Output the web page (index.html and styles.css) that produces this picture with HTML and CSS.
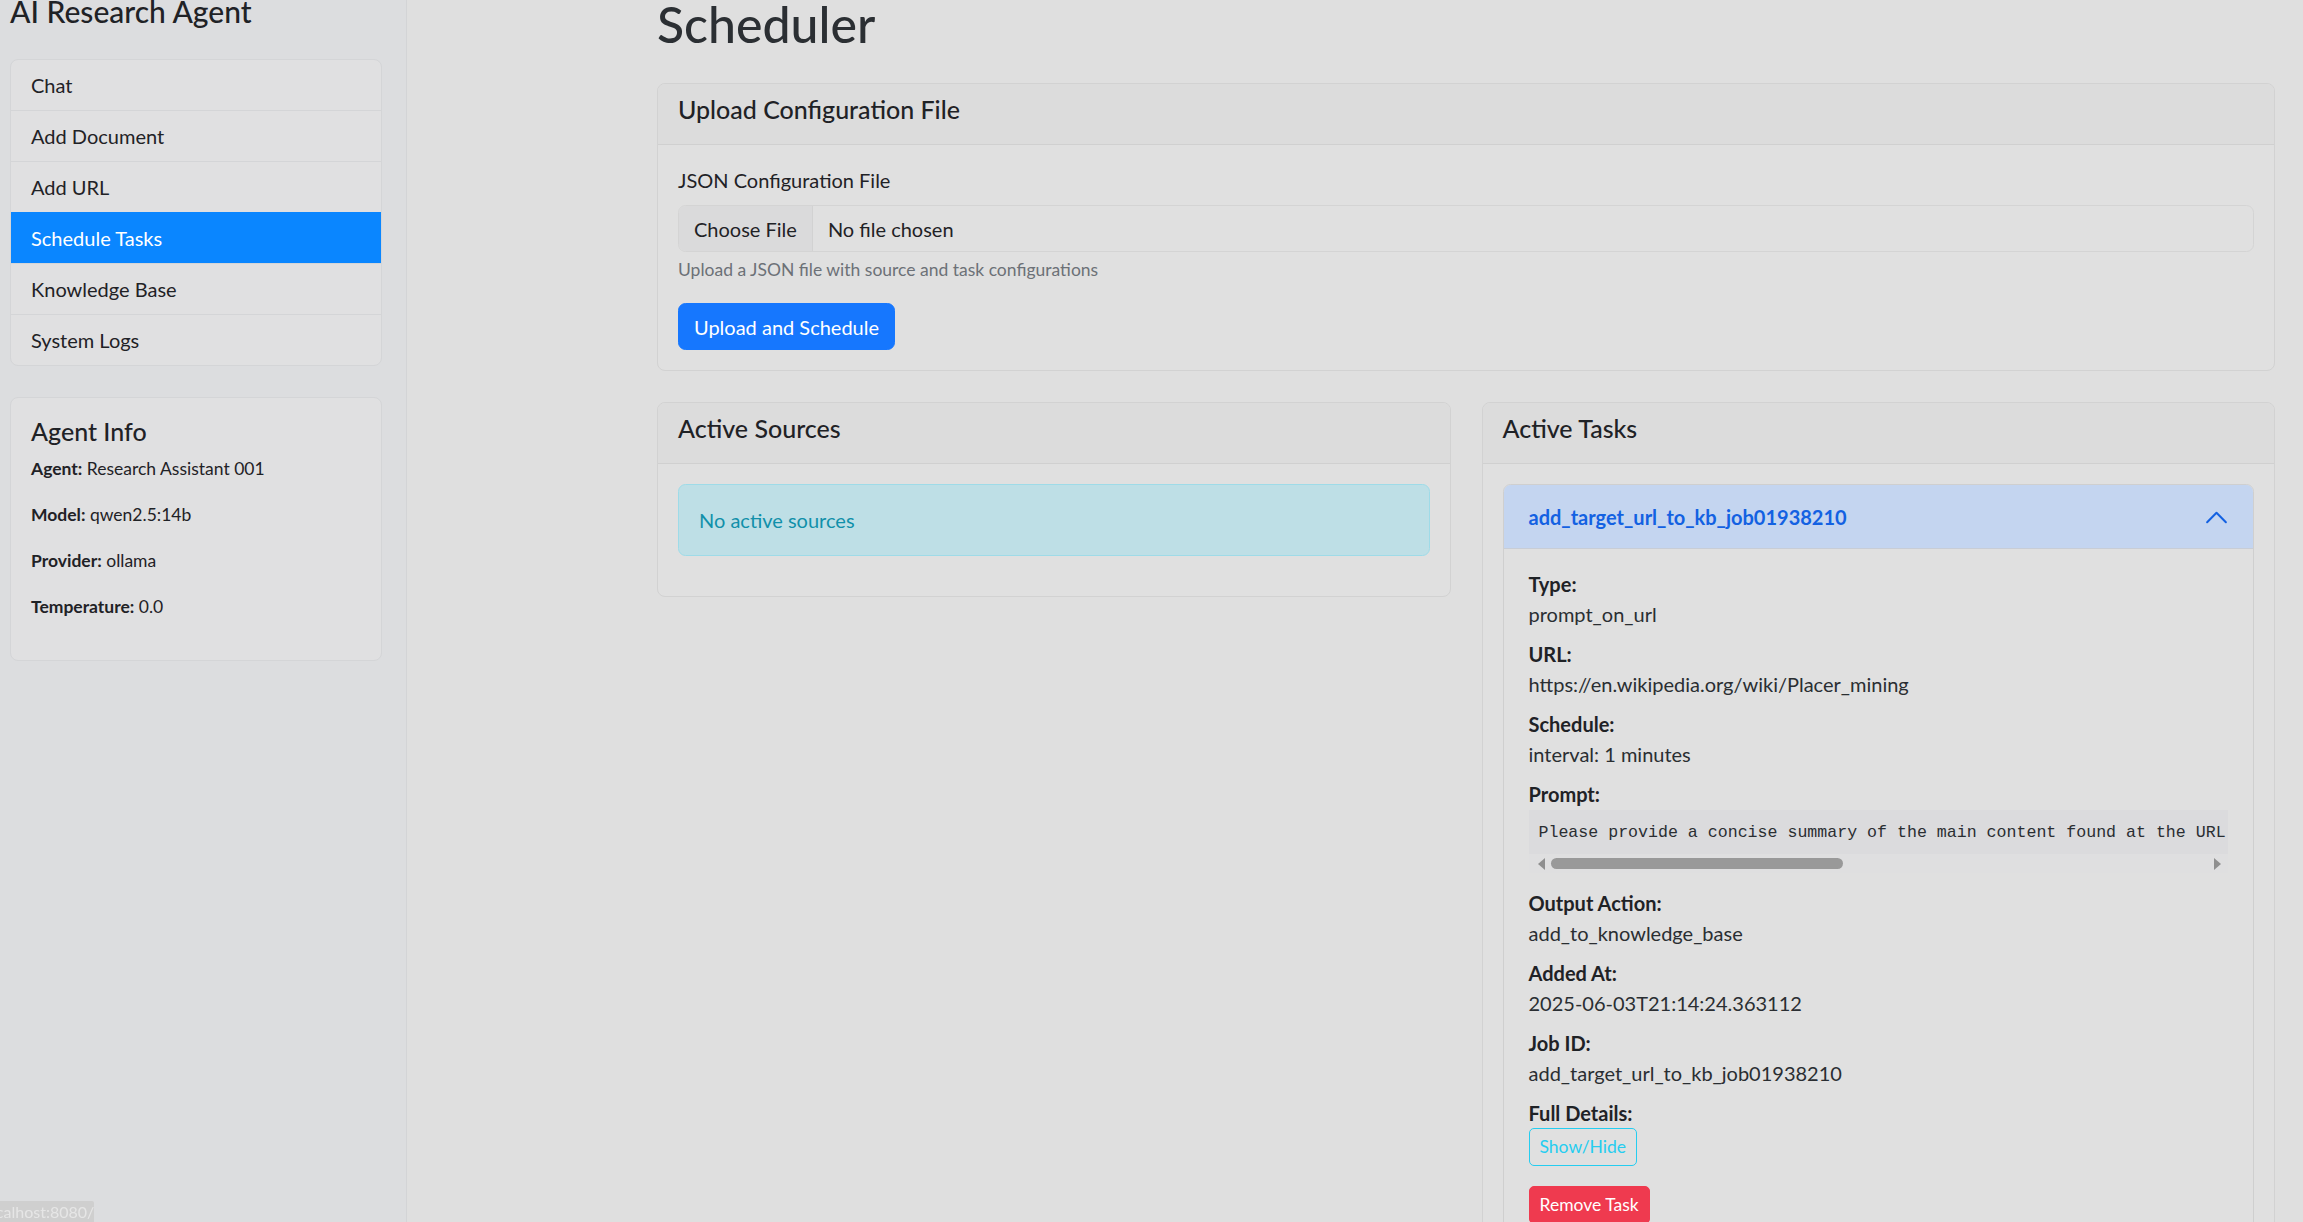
FILE: index.html
```html
<!DOCTYPE html>
<html lang="en">
<head>
<meta charset="utf-8">
<title>Scheduler - AI Research Agent</title>
<link rel="stylesheet" href="styles.css">
</head>
<body>
<div class="layout">
  <aside class="sidebar">
    <h4 class="brand">AI Research Agent</h4>
    <nav class="nav-list">
      <a class="nav-item" href="#">Chat</a>
      <a class="nav-item" href="#">Add Document</a>
      <a class="nav-item" href="#">Add URL</a>
      <a class="nav-item active" href="#">Schedule Tasks</a>
      <a class="nav-item" href="#">Knowledge Base</a>
      <a class="nav-item" href="#">System Logs</a>
    </nav>
    <div class="info-card">
      <h5 class="info-title">Agent Info</h5>
      <p class="info-line"><strong>Agent:</strong> Research Assistant 001</p>
      <p class="info-line"><strong>Model:</strong> qwen2.5:14b</p>
      <p class="info-line"><strong>Provider:</strong> ollama</p>
      <p class="info-line"><strong>Temperature:</strong> 0.0</p>
    </div>
  </aside>

  <main class="main">
    <h1 class="page-title">Scheduler</h1>

    <section class="card upload-card">
      <div class="card-header"><h5 class="card-title">Upload Configuration File</h5></div>
      <div class="card-body">
        <div class="form-group">
          <label class="form-label">JSON Configuration File</label>
          <div class="file-input">
            <span class="file-btn">Choose File</span>
            <span class="file-name">No file chosen</span>
          </div>
          <div class="form-text">Upload a JSON file with source and task configurations</div>
        </div>
        <button class="btn btn-primary">Upload and Schedule</button>
      </div>
    </section>

    <div class="columns">
      <section class="card">
        <div class="card-header"><h5 class="card-title">Active Sources</h5></div>
        <div class="card-body">
          <div class="alert-info">No active sources</div>
        </div>
      </section>

      <section class="card">
        <div class="card-header"><h5 class="card-title">Active Tasks</h5></div>
        <div class="card-body">
          <div class="accordion-item">
            <div class="accordion-button">
              <span>add_target_url_to_kb_job01938210</span>
              <svg class="chevron" viewBox="0 0 16 16" width="25" height="25"><path d="M2 11L8 5L14 11" fill="none" stroke="#1361e2" stroke-width="1.3" stroke-linecap="round" stroke-linejoin="round"/></svg>
            </div>
            <div class="accordion-body">
              <div class="field"><strong class="field-label">Type:</strong><div class="field-value">prompt_on_url</div></div>
              <div class="field"><strong class="field-label">URL:</strong><div class="field-value">https://en.wikipedia.org/wiki/Placer_mining</div></div>
              <div class="field"><strong class="field-label">Schedule:</strong><div class="field-value">interval: 1 minutes</div></div>
              <div class="field">
                <strong class="field-label">Prompt:</strong>
                <div class="prompt-box">
                  <pre class="prompt">Please provide a concise summary of the main content found at the URL. Highlight the key points, important facts and any notable details that should be added to the knowledge base.</pre>
                  <div class="hscroll">
                    <span class="arrow arrow-left"></span>
                    <span class="thumb"></span>
                    <span class="track-rest"></span>
                    <span class="arrow arrow-right"></span>
                  </div>
                </div>
              </div>
              <div class="field"><strong class="field-label">Output Action:</strong><div class="field-value">add_to_knowledge_base</div></div>
              <div class="field"><strong class="field-label">Added At:</strong><div class="field-value">2025-06-03T21:14:24.363112</div></div>
              <div class="field"><strong class="field-label">Job ID:</strong><div class="field-value">add_target_url_to_kb_job01938210</div></div>
              <div class="field field-last"><strong class="field-label">Full Details:</strong><button class="btn-sm btn-outline-info">Show/Hide</button></div>
              <button class="btn-sm btn-danger">Remove Task</button>
            </div>
          </div>
        </div>
      </section>
    </div>
  </main>
</div>
<div class="status-bubble"><span>localhost:8080/u</span></div>
</body>
</html>
```
FILE: styles.css
```css
* { box-sizing: border-box; }

html, body {
  margin: 0;
  padding: 0;
  height: 100%;
  overflow: hidden;
}

body {
  font-family: Lato, "Open Sans", "Liberation Sans", sans-serif;
  font-size: 20px;
  line-height: 30px;
  color: #1f2226;
  background: #dfdfdf;
}

.layout {
  display: flex;
  min-height: 100vh;
}

/* Sidebar */
.sidebar {
  width: 407px;
  flex: 0 0 407px;
  background: #dcdddf;
  border-right: 1px solid #d3d4d6;
  padding: 0 24px 0 10px;
}

.brand {
  margin: -7px 0 30px;
  font-size: 30px;
  line-height: 36px;
  font-weight: 500;
  color: #1f2226;
}

.nav-list {
  display: flex;
  flex-direction: column;
  border: 1px solid #d4d5d7;
  border-radius: 8px;
  background: #e0e0e1;
  overflow: hidden;
}

.nav-item {
  display: block;
  padding: 10px 20px;
  line-height: 30px;
  color: #1f2226;
  text-decoration: none;
  border-top: 1px solid #d4d5d7;
}

.nav-item:first-child { border-top: none; }

.nav-item.active {
  background: #0a86ff;
  color: #ffffff;
  border-top-color: #0a86ff;
  margin: 0 -1px;
  padding-left: 21px;
}

.info-card {
  margin-top: 31px;
  border: 1px solid #d4d5d7;
  border-radius: 8px;
  background: #e0e0e1;
  padding: 18px 20px 20px;
}

.info-title {
  margin: 0 0 10px;
  font-size: 25px;
  line-height: 30px;
  font-weight: 500;
}

.info-line {
  margin: 0 0 20px;
  font-size: 17.5px;
  line-height: 26px;
}

.info-line strong { font-weight: 700; }

/* Main */
.main {
  flex: 1;
  min-width: 0;
  padding: 0 28px 0 250px;
}

.page-title {
  margin: -6px 0 29px;
  font-size: 50px;
  line-height: 60px;
  font-weight: 500;
  color: #2b2f33;
}

.card {
  background: #e0e0e0;
  border: 1px solid #d2d2d2;
  border-radius: 8px;
  overflow: hidden;
  min-width: 0;
}

.upload-card { margin-bottom: 31px; }

.card-header {
  background: #dcdcdc;
  border-bottom: 1px solid #d0d0d0;
  padding: 10px 20px;
}

.card-title {
  margin: 0 0 10px;
  font-size: 25px;
  line-height: 30px;
  font-weight: 500;
  color: #1f2226;
}

.card-body { padding: 20px; }

.form-group { margin-bottom: 20px; }

.form-label {
  display: block;
  margin-bottom: 10px;
}

.file-input {
  display: flex;
  align-items: stretch;
  height: 47px;
  border: 1px solid #d4d4d4;
  border-radius: 7.5px;
  overflow: hidden;
  background: #e0e0e0;
}

.file-btn {
  display: flex;
  align-items: center;
  padding: 0 15px;
  background: #dadadb;
  border-right: 1px solid #d2d2d2;
}

.file-name {
  display: flex;
  align-items: center;
  padding: 0 15px;
}

.form-text {
  margin-top: 5px;
  font-size: 17.5px;
  line-height: 26px;
  color: #6c7177;
}

.btn {
  font-family: inherit;
  font-size: 20px;
  line-height: 30px;
  padding: 7.5px 15px;
  border-radius: 7.5px;
  cursor: pointer;
}

.btn-primary {
  background: #1677fe;
  border: 1px solid #1677fe;
  color: #ffffff;
}

.columns {
  display: grid;
  grid-template-columns: minmax(0, 1fr) minmax(0, 1fr);
  column-gap: 31px;
  align-items: start;
}

.alert-info {
  background: #bedfe6;
  border: 1px solid #9edbe8;
  border-radius: 7.5px;
  color: #1190aa;
  padding: 20px;
  margin-bottom: 20px;
}

/* Accordion */
.accordion-item {
  border: 1px solid #cfcfcf;
  border-radius: 7.5px;
  overflow: hidden;
}

.accordion-button {
  display: flex;
  align-items: center;
  justify-content: space-between;
  background: #c4d5f0;
  color: #1361e2;
  font-weight: 700;
  padding: 17px 24px 17px 25px;
  box-shadow: inset 0 -1px 0 #c8cdd6;
}

.chevron { display: block; }

.accordion-body {
  padding: 20px 25px;
}

.field { margin-bottom: 10px; }

.field-last { margin-bottom: 20px; }

.field-label {
  display: block;
  font-weight: 700;
  color: #1f2226;
}

.field-value { color: #2a2e32; }

.prompt-box {
  margin: 1px 0 15px;
  background: #dfdfe0;
}

.prompt {
  margin: 0;
  padding: 10px 10px 8px;
  background: #dbdbdd;
  font-family: "Liberation Mono", "DejaVu Sans Mono", monospace;
  font-size: 16.6px;
  line-height: 26px;
  color: #2a2e32;
  white-space: pre;
  overflow: hidden;
}

.hscroll {
  display: flex;
  align-items: center;
  height: 19px;
  padding: 0 7px 0 9px;
}

.arrow {
  width: 0;
  height: 0;
  border-top: 6px solid transparent;
  border-bottom: 6px solid transparent;
}

.arrow-left { border-right: 7px solid #8f8f8f; }

.arrow-right { border-left: 7px solid #8f8f8f; }

.thumb {
  width: 292px;
  height: 11px;
  margin-left: 6px;
  border-radius: 6px;
  background: #999999;
}

.track-rest { flex: 1; }

.btn-sm {
  display: inline-block;
  font-family: inherit;
  font-size: 17.5px;
  line-height: 26px;
  padding: 5px 10px;
  border-radius: 5px;
  cursor: pointer;
}

.btn-outline-info {
  background: transparent;
  border: 1px solid #25cdf0;
  color: #25cdf0;
}

.btn-danger {
  background: #ef3a4f;
  border: 1px solid #ef3a4f;
  color: #ffffff;
}

.status-bubble {
  position: fixed;
  left: 0;
  bottom: 0;
  width: 94px;
  height: 21px;
  background: #cfcfcf;
  color: #e6e6e6;
  font-size: 16px;
  line-height: 21px;
  overflow: hidden;
  white-space: nowrap;
  border-top-right-radius: 2px;
}

.status-bubble span {
  display: block;
  margin-left: -17px;
}
```
